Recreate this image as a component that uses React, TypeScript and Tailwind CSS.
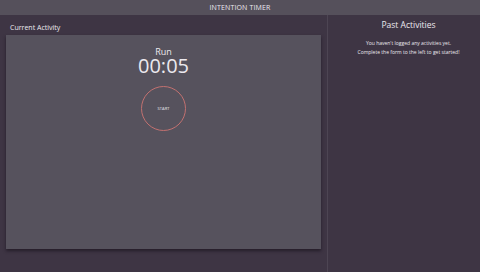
import React from "react";

const font = { fontFamily: '"Open Sans", "DejaVu Sans", sans-serif' };

export default function App() {
  return (
    <div className="w-[480px] h-[272px] flex flex-col bg-[#3e3544] text-[#ece9ef] overflow-hidden" style={font}>
      {/* Header */}
      <header className="h-[15px] bg-[#55505b] flex items-center justify-center shrink-0">
        <h1 className="text-[7px] leading-none tracking-[0.02em] font-normal">INTENTION TIMER</h1>
      </header>

      <main className="flex flex-1">
        {/* Current activity */}
        <section className="w-[327px] flex flex-col pl-[6px] pr-[6px]">
          <h2 className="text-[7px] leading-none pl-[4px] pt-[9px] pb-[4px]">Current Activity</h2>
          <div className="h-[214px] bg-[#56525d] shadow-[0_2px_3px_rgba(20,14,24,0.6)] flex flex-col items-center">
            <p className="text-[9px] leading-[9px] mt-[12px]">Run</p>
            <p className="text-[20px] leading-[16px] mt-[2px]">00:05</p>
            <button className="mt-[12px] w-[45px] h-[45px] rounded-full border-[1.5px] border-[#c27170] flex items-center justify-center text-[4px] tracking-[0.02em] text-[#ece9ef]">
              START
            </button>
          </div>
        </section>

        {/* Past activities */}
        <section className="flex-1 border-l border-[#4d4553] flex flex-col items-center pl-[9px]">
          <h2 className="text-[8.5px] leading-none mt-[6px]">Past Activities</h2>
          <p className="text-[5px] leading-[9px] text-center mt-[9px]">
            You haven't logged any activities yet.
            <br />
            Complete the form to the left to get started!
          </p>
        </section>
      </main>
    </div>
  );
}
